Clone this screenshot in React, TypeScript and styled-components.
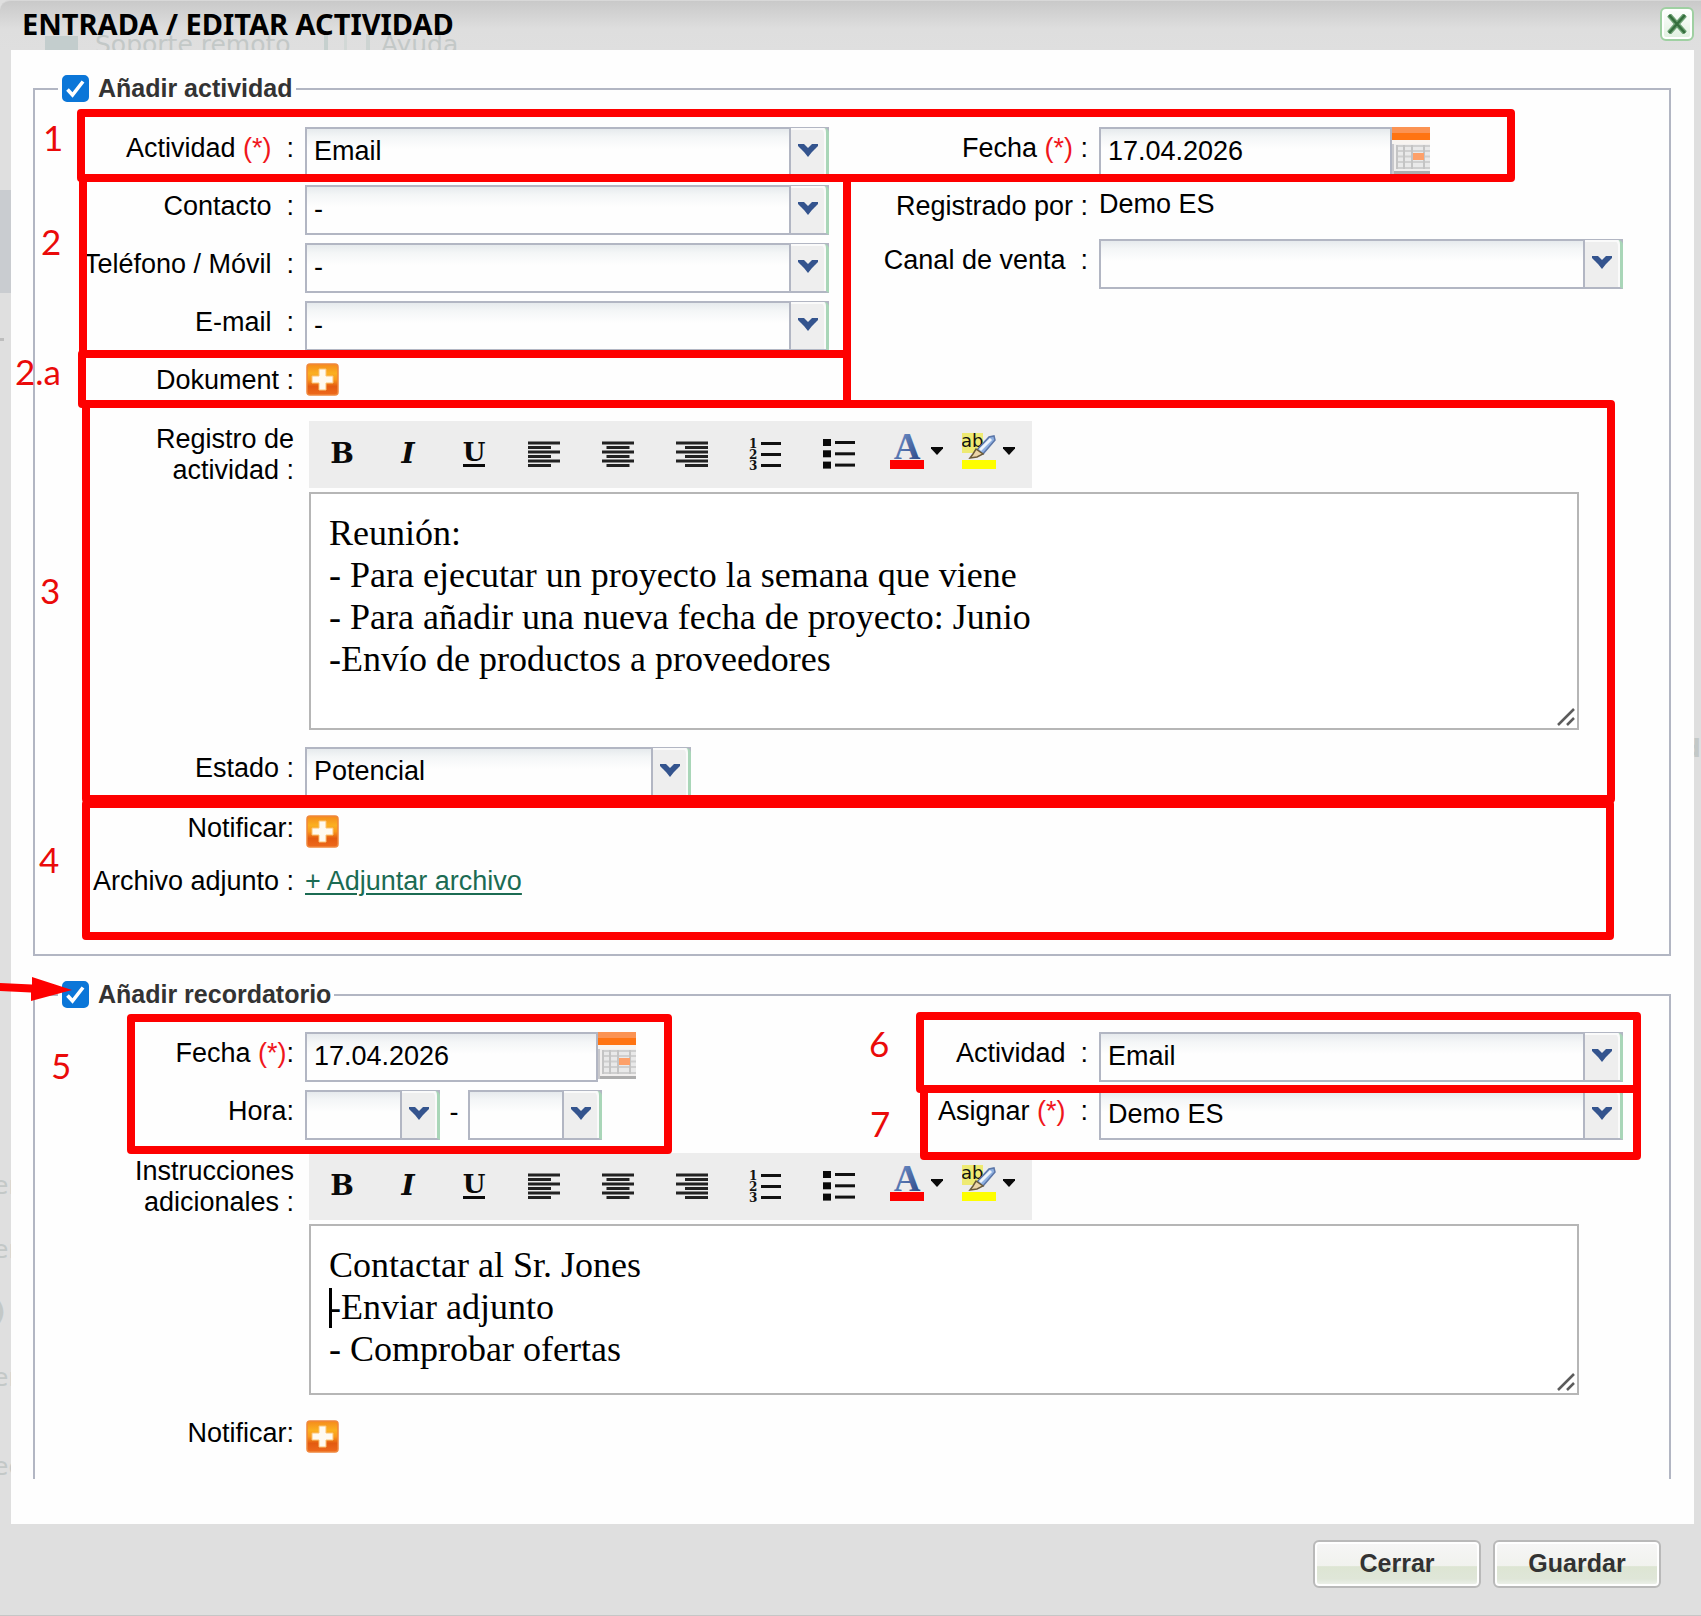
import React, { useState } from "react";
import styled, { createGlobalStyle, css } from "styled-components";

const line = "#b2b6c3";
const sans = `"Liberation Sans", Arial, sans-serif`;

const GlobalStyle = createGlobalStyle`
  *, *::before, *::after { box-sizing: border-box; }
  body { margin: 0; background: #dfdfdf; }
  button, input, select, textarea { font: inherit; color: inherit; }
`;

/* ---------- dialog frame ---------- */

const Dialog = styled.main`
  position: relative;
  overflow: hidden;
  min-height: 100vh;
  display: flex;
  flex-direction: column;
  background: #dfdfdf;
  border-bottom: 1px solid #c6c6c6;
  font: 27px/31px ${sans};
  color: #000;
`;

const Header = styled.header`
  height: 50px;
  padding: 0 7px 4px 22px;
  display: flex;
  align-items: center;
  justify-content: space-between;
  border-top: 1px solid #d8d8d8;
  border-top-left-radius: 10px;
  background: linear-gradient(#c9c9c9, #dedede 28px, #dfdfdf);
`;

const Title = styled.h1`
  position: relative;
  margin: 0;
  font: bold 29px/44px "Noto Sans", "Open Sans", sans-serif;
`;

const CloseButton = styled.button`
  width: 34px;
  height: 34px;
  padding: 0;
  border: 2px solid #9fd0a2;
  border-radius: 6px;
  background: linear-gradient(#fff, #dff0df);
  box-shadow: inset 0 0 0 2px #fff;
  display: grid;
  place-items: center;
`;

const Panel = styled.section`
  position: relative;
  margin: 0 7px 0 11px;
  padding: 23px 23px 45px 22px;
  background: #fefefe;
`;

const Footer = styled.footer`
  padding: 16px 40px 27px;
  display: flex;
  justify-content: flex-end;
  gap: 12px;
`;

const FooterButton = styled.button`
  width: 168px;
  height: 48px;
  padding: 0 0 3px;
  border: 2px solid #b9b9b9;
  border-radius: 6px;
  background: linear-gradient(#f6f6f6, #f1f2ee 54%, #dde5d3 56%, #dfe6d8 84%, #f0f3ee);
  box-shadow: inset 0 0 0 2px #fff;
  font: bold 25px/30px ${sans};
  color: #333;
`;

/* ---------- page showing through the translucent frame ---------- */

const Ghost = styled.span<{ $x: number; $y: number; $bold?: boolean }>`
  position: absolute;
  left: ${(p) => p.$x}px;
  top: ${(p) => p.$y}px;
  font: ${(p) => (p.$bold ? "bold" : "normal")} 25px/30px "DejaVu Sans", Verdana, sans-serif;
  color: #c3c8c7;
  white-space: nowrap;
`;

const GhostBlock = styled.span<{ $x: number; $y: number; $w: number; $h: number; $c: string }>`
  position: absolute;
  left: ${(p) => p.$x}px;
  top: ${(p) => p.$y}px;
  width: ${(p) => p.$w}px;
  height: ${(p) => p.$h}px;
  background: ${(p) => p.$c};
`;

/* ---------- form ---------- */

const Group = styled.fieldset<{ $open?: boolean }>`
  min-width: 0;
  margin: 0;
  padding: ${(p) => (p.$open ? "22px 0" : "23px 0 49px")};
  border: 2px solid ${line};
  ${(p) => p.$open && css`border-bottom: 0;`}
  & + & { margin-top: 23px; }
`;

const Legend = styled.legend`
  height: 31px;
  margin-left: 23px;
  padding: 0 3px 0 4px;
  display: flex;
  align-items: center;
  gap: 9px;
  font-size: 25px;
  font-weight: bold;
  color: #333;
`;

const Tick = styled.span`
  display: grid;
  width: 27px;
  height: 27px;
  & > * { grid-area: 1 / 1; }
  & > svg { pointer-events: none; }
`;

const TickBox = styled.input`
  appearance: none;
  width: 27px;
  height: 27px;
  margin: 0;
  border: 2px solid #767676;
  border-radius: 5px;
  background: #fff;
  &:checked { border-color: #0b76d8; background: #0b76d8; }
`;

const Halves = styled.div`
  display: grid;
  grid-template-columns: 1fr 1fr;
  padding-right: 46px;
`;

const Rows = styled.div`
  display: flex;
  flex-direction: column;
  gap: 8px;
`;

const Row = styled.div<{ $h?: number; $top?: number }>`
  display: grid;
  grid-template-columns: 259px minmax(0, 1fr);
  column-gap: 11px;
  align-items: start;
  min-height: ${(p) => p.$h ?? 50}px;
  margin-top: ${(p) => p.$top ?? 0}px;
`;

const LabelText = styled.label<{ $top?: number }>`
  padding-top: ${(p) => p.$top ?? 6}px;
  text-align: right;
`;

const Star = styled.span`
  color: #f0161c;
`;

const PlainValue = styled.output`
  padding-top: 4px;
`;

const fieldLook = css`
  height: 50px;
  padding: 0 7px 2px;
  border: 2px solid ${line};
  border-radius: 0;
  background: linear-gradient(#e6eaed, #f4f6f7 8px, #fefefe 20px);
  outline: none;
`;

const SelectWrap = styled.span<{ $w?: number }>`
  display: grid;
  grid-template-columns: minmax(0, 1fr) 40px;
  width: ${(p) => (p.$w ? `${p.$w}px` : "100%")};
`;

const SelectBox = styled.select`
  ${fieldLook}
  grid-area: 1 / 1 / 2 / 3;
  appearance: none;
  width: 100%;
`;

const Trigger = styled.span`
  grid-area: 1 / 2;
  margin-top: 1px;
  border: solid ${line};
  border-width: 0 0 2px 2px;
  border-right: 3px solid #a9d6b8;
  border-top-right-radius: 5px;
  background: #eee;
  box-shadow: inset -2px 2px 0 #fafafa;
  pointer-events: none;
  display: grid;
  place-items: center;
  padding: 0 2px 3px 0;
`;

const DateWrap = styled.span`
  display: flex;
  align-items: flex-start;
`;

const DateInput = styled.input`
  ${fieldLook}
  width: 293px;
`;

const IconButton = styled.button<{ $top?: number }>`
  display: block;
  justify-self: start;
  margin: ${(p) => p.$top ?? 0}px 0 0;
  padding: 0;
  border: 0;
  background: none;
  line-height: 0;
`;

const HourPair = styled.span`
  display: flex;
  align-items: center;
`;

const Dash = styled.span`
  width: 28px;
  padding-bottom: 6px;
  text-align: center;
`;

const AttachLink = styled.a`
  justify-self: start;
  padding-top: 6px;
  color: #1b6b53;
  text-decoration: underline;
  text-decoration-thickness: 2px;
  text-underline-offset: 3px;
`;

/* ---------- rich text editor ---------- */

const Editor = styled.div`
  padding: 0 90px 0 4px;
  display: flex;
  flex-direction: column;
  align-items: stretch;
  gap: 4px;
`;

const Toolbar = styled.div`
  align-self: flex-start;
  height: 67px;
  padding-right: 11px;
  display: flex;
  background: #ededed;
`;

const Tool = styled.button<{ $w: number }>`
  width: ${(p) => p.$w}px;
  height: 67px;
  padding: 0 0 1px;
  border: 0;
  background: none;
  display: flex;
  align-items: center;
  justify-content: center;
`;

const ColorTool = styled.button`
  width: 72px;
  height: 67px;
  padding: 0 0 7px 13px;
  border: 0;
  background: none;
  display: flex;
  align-items: center;
  gap: 7px;
`;

const Glyph = styled.span<{ $italic?: boolean; $under?: boolean }>`
  font: ${(p) => (p.$italic ? "italic" : "normal")} bold 28px/24px "DejaVu Serif", serif;
  color: #0a0a0a;
  ${(p) => p.$under && css`
    font-size: 26px;
    line-height: 23px;
    border-bottom: 3px solid #0a0a0a;
  `}
`;

const TextWrap = styled.div`
  position: relative;
`;

const TextArea = styled.textarea<{ $h: number }>`
  display: block;
  width: 100%;
  height: ${(p) => p.$h}px;
  padding: 18px 18px 0;
  border: 2px solid #b6b6b6;
  background: #fff;
  outline: none;
  resize: none;
  overflow: hidden;
  font: 36px/42px "Liberation Serif", "Times New Roman", serif;
`;

const Grip = styled.svg`
  position: absolute;
  right: 3px;
  bottom: 3px;
`;

const TextCursor = styled.span`
  position: absolute;
  left: 20px;
  top: 64px;
  width: 3px;
  height: 40px;
  background: #000;
`;

/* ---------- red call-outs over the form ---------- */

const Callout = styled.div<{ $x: number; $y: number; $w: number; $h: number }>`
  position: absolute;
  left: ${(p) => p.$x}px;
  top: ${(p) => p.$y}px;
  width: ${(p) => p.$w}px;
  height: ${(p) => p.$h}px;
  border: 8px solid #fe0000;
  border-radius: 4px;
  pointer-events: none;
`;

const Step = styled.span<{ $x: number; $y: number }>`
  position: absolute;
  left: ${(p) => p.$x}px;
  top: ${(p) => p.$y}px;
  font: 35px/36px Lato, "Open Sans", sans-serif;
  color: #ea0a0a;
`;

const Pointer = styled.svg`
  position: absolute;
  left: 0;
  top: 975px;
  pointer-events: none;
`;

/* ---------- drawings ---------- */

const ChevronIcon = () => (
  <svg width="20" height="13" viewBox="0 0 20 13">
    <path d="M0 0h6l4 4 4-4h6v2l-3 3-3 3-4 5-4-5-3-3-3-3z" fill="#34548e" />
  </svg>
);

const TickIcon = () => (
  <svg width="27" height="27" viewBox="0 0 27 27">
    <path d="M5.5 14.5l5 5.5L21 6.5" fill="none" stroke="#fff" strokeWidth="3.6" />
  </svg>
);

const CloseIcon = () => (
  <svg width="20" height="20" viewBox="0 0 20 20">
    <path d="M2 1l16 18M18 1L2 19" stroke="#6fa376" strokeWidth="5" />
    <path d="M2 1l16 18M18 1L2 19" stroke="#356f3d" strokeWidth="2.5" />
  </svg>
);

const PlusIcon = ({ id }: { id: string }) => (
  <svg width="34" height="33" viewBox="0 0 34 33">
    <defs>
      <linearGradient id={id} x1="0" y1="0" x2="0" y2="1">
        <stop offset="0" stopColor="#f58a1c" />
        <stop offset="0.3" stopColor="#fbb01f" />
        <stop offset="0.5" stopColor="#f99a1c" />
        <stop offset="0.72" stopColor="#e35a10" />
        <stop offset="1" stopColor="#ee6a1c" />
      </linearGradient>
    </defs>
    <rect x="2" y="1" width="31" height="31" rx="3" fill={`url(#${id})`} stroke="#f0873c" strokeWidth="1.5" />
    <path d="M14 6h7v7h7v7h-7v7h-7v-7H7v-7h7z" fill="#fffaf0" stroke="#fbc373" strokeWidth="1" />
  </svg>
);

const CalendarIcon = () => (
  <svg width="38" height="47" viewBox="0 0 38 47">
    <rect width="39" height="47" fill="#f1efee" />
    <rect width="39" height="13" fill="#ff7412" />
    <rect width="39" height="6" fill="#fb9353" />
    <rect y="13" width="39" height="4" fill="#f8f4f0" />
    <rect x="4" y="18" width="35" height="24" fill="#e9e9e9" />
    <path d="M4 19h35M4 24h35M4 29.5h35M4 35h35M4 41h35" stroke="#cfcfcf" strokeWidth="2" />
    <path d="M5 18v24M12 18v24M20 18v24M32 18v24" stroke="#c4c4c4" strokeWidth="2" />
    <rect x="21" y="26" width="11" height="7" fill="#fda069" />
    <path d="M0 17h2v30H0z" fill="#c8c8cc" />
    <rect x="2" y="44" width="37" height="3" fill="#adadad" />
  </svg>
);

const AlignIcon = ({ to }: { to: "left" | "center" | "right" }) => (
  <svg width="32" height="27" viewBox="0 0 32 27">
    {[0, 1, 2, 3, 4, 5].map((i) => {
      const w = i % 2 ? 23 : 32;
      const x = to === "left" ? 0 : to === "right" ? 32 - w : (32 - w) / 2;
      return <rect key={i} x={x} y={0.5 + i * 4.5} width={w} height="3" fill="#222" />;
    })}
  </svg>
);

const NumberedIcon = () => (
  <svg width="34" height="34" viewBox="0 0 34 34">
    {["1", "2", "3"].map((n, i) => (
      <React.Fragment key={n}>
        <text x="0" y={11 + i * 11} fontFamily="DejaVu Serif, serif" fontWeight="bold" fontSize="12" fill="#111">{n}</text>
        <rect x="12" y={5 + i * 11} width="20" height="3" fill="#111" />
      </React.Fragment>
    ))}
  </svg>
);

const BulletIcon = () => (
  <svg width="35" height="32" viewBox="0 0 35 32">
    {[0, 1, 2].map((i) => (
      <React.Fragment key={i}>
        <rect x="0" y={1 + i * 11.3} width="8" height="7" fill="#0a0a0a" />
        <rect x="12" y={3 + i * 11.3} width="20" height="3" fill="#111" />
      </React.Fragment>
    ))}
  </svg>
);

const CaretIcon = () => (
  <svg width="12" height="8" viewBox="0 0 12 8">
    <path d="M0 0h12v1.500L6 8 0 1.500z" fill="#0a0a0a" />
  </svg>
);

const ColorIcon = () => (
  <svg width="34" height="38" viewBox="0 0 34 38">
    <defs>
      <linearGradient id="ink" x1="0" y1="0" x2="1" y2="1">
        <stop offset="0" stopColor="#7f9fd6" />
        <stop offset="1" stopColor="#23407f" />
      </linearGradient>
    </defs>
    <text x="17" y="27" textAnchor="middle" fontFamily="Liberation Serif, serif" fontWeight="bold" fontSize="37" fill="url(#ink)">A</text>
    <rect y="28" width="34" height="9" fill="#fe0000" />
  </svg>
);

const HighlightIcon = () => (
  <svg width="34" height="38" viewBox="0 0 34 38">
    <rect y="1" width="21" height="20" fill="#eeea72" />
    <text x="-1" y="15" fontFamily="DejaVu Sans, sans-serif" fontSize="18" fill="#111">ab</text>
    <path d="M15 18L27 5l5-1 1 4-12 14z" fill="#8fb0e0" stroke="#5b76a8" strokeWidth="1.5" />
    <path d="M18 18L29 7" stroke="#eef4fc" strokeWidth="3" />
    <path d="M14 17l7 5-6 3-7 1 3-4z" fill="#ecd5a8" stroke="#6b5a3a" strokeWidth="1.5" />
    <rect y="28" width="34" height="9" fill="#fefe00" />
  </svg>
);

/* ---------- parts ---------- */

type SelectProps = { id: string; value: string; width?: number; label?: string };

const Select = ({ id, value, width, label }: SelectProps) => (
  <SelectWrap $w={width}>
    <SelectBox id={id} aria-label={label} defaultValue={value}>
      <option value={value}>{value}</option>
    </SelectBox>
    <Trigger><ChevronIcon /></Trigger>
  </SelectWrap>
);

const DateField = ({ id }: { id: string }) => (
  <DateWrap>
    <DateInput id={id} type="text" defaultValue="17.04.2026" />
    <IconButton type="button" aria-label="Calendario"><CalendarIcon /></IconButton>
  </DateWrap>
);

const Check = ({ id, children }: { id: string; children: string }) => {
  const [on, setOn] = useState(true);
  return (
    <Legend>
      <Tick>
        <TickBox id={id} type="checkbox" checked={on} onChange={() => setOn(!on)} />
        {on && <TickIcon />}
      </Tick>
      <label htmlFor={id}>{children}</label>
    </Legend>
  );
};

type EditorProps = { id: string; text: string; height: number; cursor?: boolean };

const RichText = ({ id, text, height, cursor }: EditorProps) => (
  <Editor>
    <Toolbar role="toolbar">
      <Tool $w={66} type="button" aria-label="Negrita"><Glyph>B</Glyph></Tool>
      <Tool $w={66} type="button" aria-label="Cursiva"><Glyph $italic>I</Glyph></Tool>
      <Tool $w={66} type="button" aria-label="Subrayado"><Glyph $under>U</Glyph></Tool>
      <Tool $w={74} type="button" aria-label="Izquierda"><AlignIcon to="left" /></Tool>
      <Tool $w={74} type="button" aria-label="Centro"><AlignIcon to="center" /></Tool>
      <Tool $w={74} type="button" aria-label="Derecha"><AlignIcon to="right" /></Tool>
      <Tool $w={74} type="button" aria-label="Lista numerada"><NumberedIcon /></Tool>
      <Tool $w={74} type="button" aria-label="Lista"><BulletIcon /></Tool>
      <ColorTool type="button" aria-label="Color de texto"><ColorIcon /><CaretIcon /></ColorTool>
      <ColorTool type="button" aria-label="Resaltado"><HighlightIcon /><CaretIcon /></ColorTool>
    </Toolbar>
    <TextWrap>
      <TextArea id={id} $h={height} defaultValue={text} spellCheck={false} />
      {cursor && <TextCursor />}
      <Grip width="20" height="20" viewBox="0 0 20 20">
        <path d="M2 18L18 2M11 18l7-7" stroke="#5c5c5c" strokeWidth="2.500" />
      </Grip>
    </TextWrap>
  </Editor>
);

const note = [
  "Reunión:",
  "- Para ejecutar un proyecto la semana que viene",
  "- Para añadir una nueva fecha de proyecto: Junio",
  "-Envío de productos a proveedores",
].join("\n");

const reminder = ["Contactar al Sr. Jones", "-Enviar adjunto", "- Comprobar ofertas"].join("\n");

const callouts = [
  [77, 109, 1438, 73],
  [79, 174, 772, 184],
  [78, 350, 773, 58],
  [82, 400, 1533, 403],
  [82, 800, 1532, 140],
  [127, 1014, 545, 140],
  [916, 1012, 725, 81],
  [920, 1085, 721, 75],
];

const steps: [string, number, number][] = [
  ["1", 43, 119],
  ["2", 41, 223],
  ["2.a", 15, 353],
  ["3", 40, 572],
  ["4", 39, 841],
  ["5", 51, 1047],
  ["6", 869, 1025],
  ["7", 870, 1105],
];

const sp = "\u00a0";

export default function App() {
  return (
    <>
      <GlobalStyle />
      <Dialog>
        <Header>
          <GhostBlock $x={45} $y={36} $w={33} $h={14} $c="#c3cdcd" />
          <Ghost $x={95} $y={30}>Soporte remoto</Ghost>
          <GhostBlock $x={324} $y={34} $w={4} $h={16} $c="#c6d0ce" />
          <GhostBlock $x={344} $y={34} $w={3} $h={16} $c="#d2d8d6" />
          <GhostBlock $x={366} $y={34} $w={4} $h={16} $c="#cdd4d2" />
          <Ghost $x={381} $y={30}>Ayuda</Ghost>
          <Title>ENTRADA / EDITAR ACTIVIDAD</Title>
          <CloseButton type="button" aria-label="Cerrar ventana"><CloseIcon /></CloseButton>
        </Header>
        <GhostBlock $x={0} $y={190} $w={11} $h={103} $c="#c9ccd0" />
        <GhostBlock $x={0} $y={338} $w={4} $h={3} $c="#bdbdbd" />
        <Ghost $x={-7} $y={1171}>er</Ghost>
        <Ghost $x={-7} $y={1235}>er</Ghost>
        <Ghost $x={-6} $y={1297} $bold>)</Ghost>
        <Ghost $x={-7} $y={1363}>er</Ghost>
        <Ghost $x={-7} $y={1452}>ec</Ghost>
        <Ghost $x={1683} $y={734} $bold>d</Ghost>

        <Panel>
          <Group>
            <Check id="add-activity">Añadir actividad</Check>
            <Halves>
              <Rows>
                <Row>
                  <LabelText htmlFor="activity">Actividad <Star>(*)</Star>{sp + sp}:</LabelText>
                  <Select id="activity" value="Email" />
                </Row>
                <Row>
                  <LabelText htmlFor="contact">Contacto{sp + sp}:</LabelText>
                  <Select id="contact" value="-" />
                </Row>
                <Row>
                  <LabelText htmlFor="phone">Teléfono / Móvil{sp + sp}:</LabelText>
                  <Select id="phone" value="-" />
                </Row>
                <Row>
                  <LabelText htmlFor="mail">E-mail{sp + sp}:</LabelText>
                  <Select id="mail" value="-" />
                </Row>
                <Row>
                  <LabelText htmlFor="add-document">Dokument :</LabelText>
                  <IconButton id="add-document" $top={4} type="button"><PlusIcon id="plus-document" /></IconButton>
                </Row>
              </Rows>
              <Rows>
                <Row>
                  <LabelText htmlFor="date">Fecha <Star>(*)</Star> :</LabelText>
                  <DateField id="date" />
                </Row>
                <Row $h={46}>
                  <LabelText htmlFor="author">Registrado por :</LabelText>
                  <PlainValue id="author">Demo ES</PlainValue>
                </Row>
                <Row>
                  <LabelText htmlFor="channel">Canal de venta{sp + sp}:</LabelText>
                  <Select id="channel" value="" />
                </Row>
              </Rows>
            </Halves>
            <Row $top={12}>
              <LabelText htmlFor="note" $top={3}>Registro de<br />actividad :</LabelText>
              <RichText id="note" text={note} height={238} />
            </Row>
            <Row $top={17}>
              <LabelText htmlFor="status">Estado :</LabelText>
              <Select id="status" value="Potencial" width={386} />
            </Row>
            <Row $top={10} $h={45}>
              <LabelText htmlFor="notify">Notificar:</LabelText>
              <IconButton id="notify" $top={8} type="button"><PlusIcon id="plus-notify" /></IconButton>
            </Row>
            <Row $top={8} $h={45}>
              <LabelText as="span">Archivo adjunto :</LabelText>
              <AttachLink href="#adjuntar">+ Adjuntar archivo</AttachLink>
            </Row>
          </Group>

          <Group $open>
            <Check id="add-reminder">Añadir recordatorio</Check>
            <Halves>
              <Rows>
                <Row>
                  <LabelText htmlFor="reminder-date">Fecha <Star>(*)</Star>:</LabelText>
                  <DateField id="reminder-date" />
                </Row>
                <Row>
                  <LabelText htmlFor="hour-from">Hora:</LabelText>
                  <HourPair>
                    <Select id="hour-from" value="" width={135} />
                    <Dash>-</Dash>
                    <Select id="hour-to" value="" width={134} label="Hora final" />
                  </HourPair>
                </Row>
              </Rows>
              <Rows>
                <Row>
                  <LabelText htmlFor="reminder-activity">Actividad{sp + sp}:</LabelText>
                  <Select id="reminder-activity" value="Email" />
                </Row>
                <Row>
                  <LabelText htmlFor="assignee">Asignar <Star>(*)</Star>{sp + sp}:</LabelText>
                  <Select id="assignee" value="Demo ES" />
                </Row>
              </Rows>
            </Halves>
            <Row $top={13}>
              <LabelText htmlFor="reminder" $top={3}>Instrucciones<br />adicionales :</LabelText>
              <RichText id="reminder" text={reminder} height={171} cursor />
            </Row>
            <Row $top={17} $h={45}>
              <LabelText htmlFor="reminder-notify">Notificar:</LabelText>
              <IconButton id="reminder-notify" $top={8} type="button"><PlusIcon id="plus-reminder" /></IconButton>
            </Row>
          </Group>
        </Panel>

        <Footer>
          <FooterButton type="button">Cerrar</FooterButton>
          <FooterButton type="button">Guardar</FooterButton>
        </Footer>

        {callouts.map(([x, y, w, h]) => (
          <Callout key={y} $x={x} $y={y} $w={w} $h={h} />
        ))}
        {steps.map(([n, x, y]) => (
          <Step key={n} $x={x} $y={y}>{n}</Step>
        ))}
        <Pointer width="74" height="28" viewBox="0 0 74 28">
          <path d="M0 8l32 1.500V2l40 13-41 11v-8.500L0 16z" fill="#fe0000" />
        </Pointer>
      </Dialog>
    </>
  );
}
